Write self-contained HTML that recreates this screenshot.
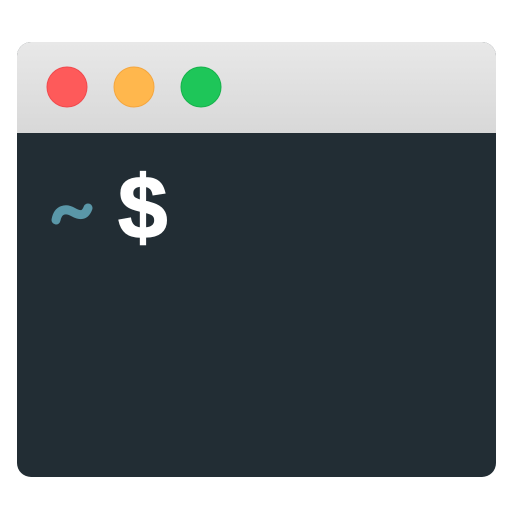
<!DOCTYPE html>
<html><head><style>
html,body{margin:0;padding:0;background:#fff;width:512px;height:512px;overflow:hidden}
</style></head><body>
<svg width="512" height="512" viewBox="0 0 512 512" xmlns="http://www.w3.org/2000/svg">
<defs>
<linearGradient id="tb" x1="0" y1="0" x2="0" y2="1">
<stop offset="0" stop-color="#e8e8e8"/><stop offset="1" stop-color="#d8d8d8"/>
</linearGradient>
<clipPath id="c"><rect x="17" y="42" width="479" height="435" rx="14"/></clipPath>
</defs>
<g clip-path="url(#c)">
<rect x="17" y="42" width="479" height="435" fill="#222d34"/>
<rect x="17" y="42" width="479" height="91" fill="url(#tb)"/>
</g>
<circle cx="67" cy="87" r="20" fill="#fe5a5a" stroke="#f04a4e" stroke-width="1"/>
<circle cx="134" cy="87" r="20" fill="#ffb74d" stroke="#f4a63f" stroke-width="1"/>
<circle cx="201" cy="87" r="20" fill="#1ec659" stroke="#17b24c" stroke-width="1"/>
<path d="M56 220 C58 209,66 208,73 212 C80 216,85 216,88 208" fill="none" stroke="#5a97a8" stroke-width="9" stroke-linecap="round"/>
<text x="118" y="238" font-family="Liberation Sans, sans-serif" font-weight="bold" font-size="89" fill="#ffffff" stroke="#ffffff" stroke-width="1.5">$</text>
</svg>
</body></html>
